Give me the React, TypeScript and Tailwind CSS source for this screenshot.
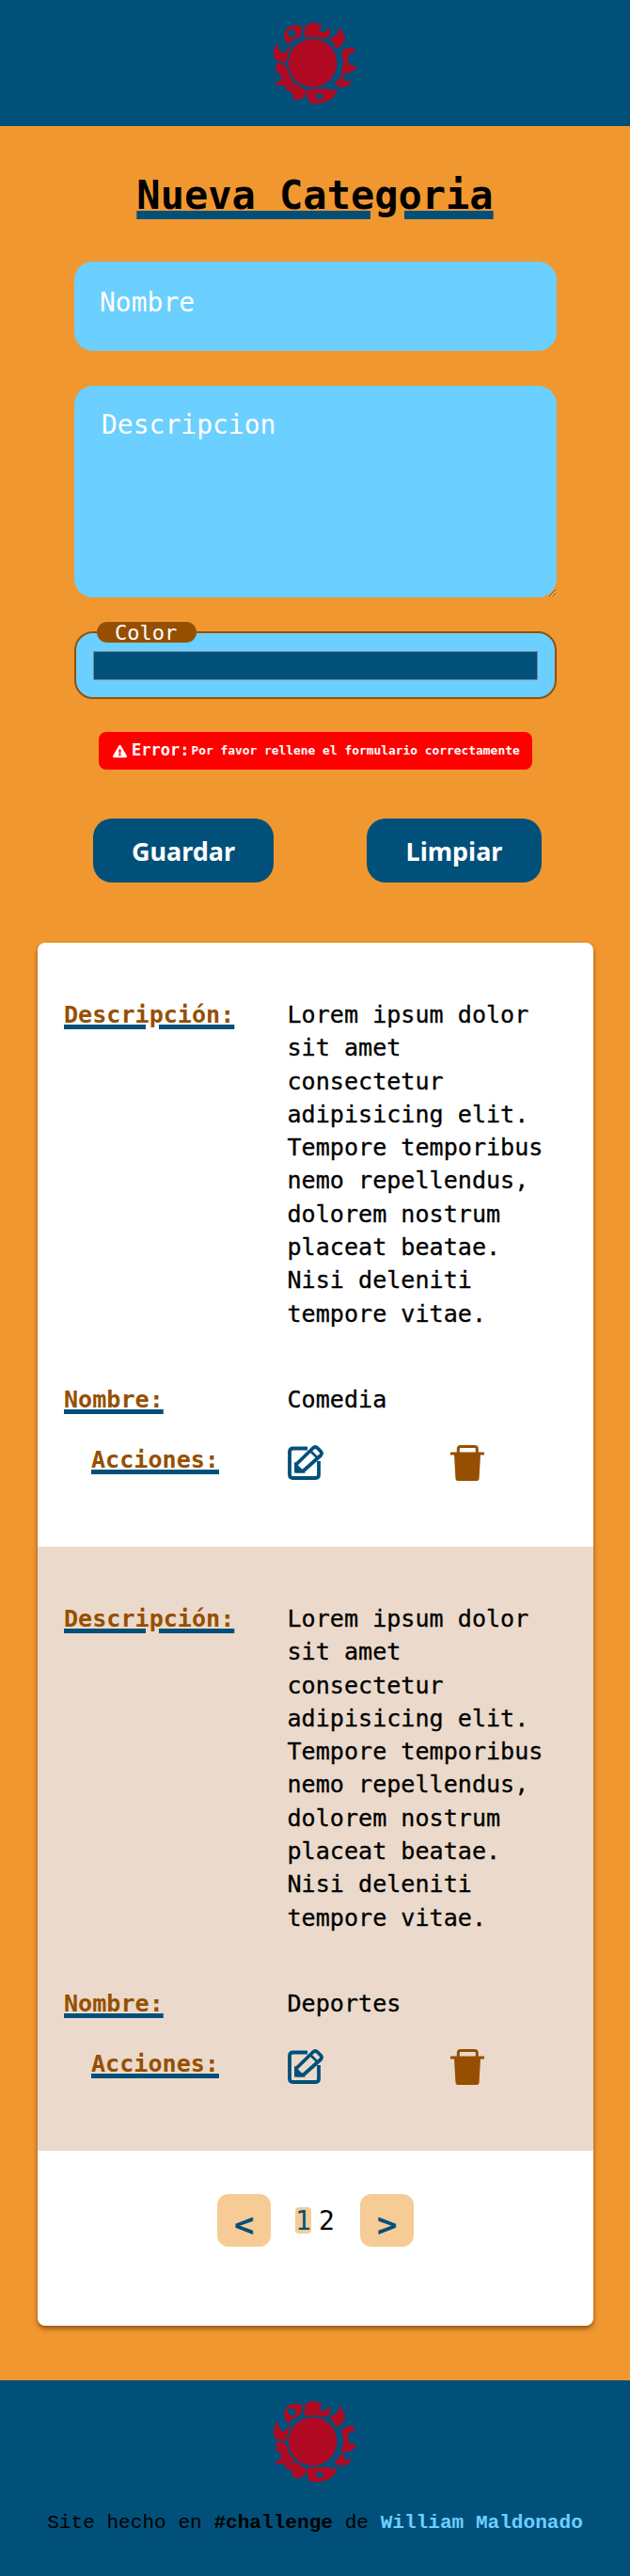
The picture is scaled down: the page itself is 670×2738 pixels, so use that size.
import { FaExclamationTriangle } from "react-icons/fa"

const mono = "font-['DejaVu_Sans_Mono','Liberation_Mono',monospace]"

function Logo() {
  return (
    <svg viewBox="125 65 265 260" className="h-[86px] w-[88px]" fill="#b00b23" stroke="#b00b23" strokeWidth="3" fillRule="evenodd">
      <path d="M222 108C228 95 222 82 232 74C240 66 258 64 270 72L282 76C272 78 268 84 272 92C278 100 292 100 302 84C308 96 304 108 296 112C280 118 270 112 250 112C240 112 230 112 222 108Z" />
      <path d="M214 78C195 72 175 74 165 90C155 105 158 122 172 134C178 124 190 118 200 114C214 108 216 90 214 78ZM183 86A14 14 0 1 0 183.1 114A14 14 0 1 0 183 86Z" />
      <path d="M338 82C336 95 330 105 318 112L306 114C312 124 320 134 325 148C345 138 355 125 350 108C347 98 342 90 338 82Z" />
      <path d="M342 162C355 146 378 140 388 158C372 158 360 170 362 186C364 200 376 208 390 206C384 222 362 230 342 226C350 210 354 180 342 162Z" />
      <path d="M350 228C340 240 330 255 320 262C335 272 360 280 375 252C360 262 340 250 350 228Z" />
      <path d="M232 288C240 300 232 314 240 320C255 328 280 322 292 318C310 314 325 300 325 278C320 285 315 290 310 282C300 276 285 282 270 278C255 274 240 278 232 288ZM272 290A12 12 0 1 0 272.1 314A12 12 0 1 0 272 290Z" />
      <path d="M160 272C172 264 185 268 200 262C210 270 220 282 232 286C225 300 218 312 200 312C185 312 180 295 190 288C180 284 170 290 160 272Z" />
      <path d="M130 200C145 192 165 200 172 218C175 232 180 245 190 258C175 266 150 268 128 262C145 258 155 245 148 232C142 222 135 222 130 226C138 216 138 206 130 200Z" />
      <path d="M136 132C138 150 145 165 160 165C166 155 172 148 178 140C172 160 168 175 168 192C150 192 130 190 126 172C124 155 130 145 136 132Z" />
      <circle cx="250" cy="195" r="84" fill="#01507a" stroke="none" />
      <circle cx="250" cy="195" r="78" stroke="none" />
    </svg>
  )
}

function EditIcon() {
  return (
    <svg viewBox="0 0 38 37" className="h-[37px] w-[38px]" fill="none" stroke="#01507a" strokeWidth="3.8">
      <path d="M21 3.5H5.5Q2 3.5 2 7V31.5Q2 35 5.5 35H29.5Q33 35 33 31.5V17" />
      <path d="M9 27.5V20.5L27 3Q29.5 1 31.5 3L35 6.5Q37 8.5 35 11L16.5 27.5Z" strokeLinejoin="round" />
      <path d="M24 6L32 14" strokeWidth="2.6" />
      <path d="M9 27.5V22L14.5 27.5Z" fill="#01507a" />
    </svg>
  )
}

function TrashIcon() {
  return (
    <svg viewBox="0 0 36 38" className="h-[38px] w-[36px]" fill="#964f00">
      <path d="M8.3 9V4Q8.3 1.5 10.8 1.5H25.8Q28.3 1.5 28.3 4V9" fill="none" stroke="#964f00" strokeWidth="3" />
      <rect x="0" y="7.5" width="36" height="3" rx="0.5" />
      <path d="M4 10L5.5 36Q5.7 38 8 38H28Q30.3 38 30.5 36L32 10Z" />
    </svg>
  )
}

function Row({ nombre, shaded }: { nombre: string; shaded?: boolean }) {
  const label =
    "font-bold text-[#964f00] underline decoration-[#01507a] decoration-[5px] underline-offset-[2px]"
  return (
    <div className={`h-[642px] pl-[28px] pt-[59px] text-[25.1px] leading-[35.3px] ${shaded ? "bg-[#ebdacb]" : ""}`}>
      <div className="flex">
        <span className={`w-[237.5px] shrink-0 ${label}`}>Descripción:</span>
        <p className="w-[300px] text-black [-webkit-text-stroke:0.3px_black]">
          Lorem ipsum dolor sit amet consectetur adipisicing elit. Tempore temporibus nemo repellendus, dolorem nostrum
          placeat beatae. Nisi deleniti tempore vitae.
        </p>
      </div>
      <div className="mt-[56px] flex">
        <span className={`w-[237.5px] shrink-0 ${label}`}>Nombre:</span>
        <span className="text-black [-webkit-text-stroke:0.3px_black]">{nombre}</span>
      </div>
      <div className="mt-[29px] flex">
        <div className="w-[237.5px] shrink-0 pl-[29px]">
          <span className={label}>Acciones:</span>
        </div>
        <div className="mt-[2px] flex w-[209px] items-start justify-between">
          <EditIcon />
          <TrashIcon />
        </div>
      </div>
    </div>
  )
}

export default function App() {
  return (
    <div className={`flex min-h-[2738px] w-[670px] flex-col bg-[#f1972f] ${mono}`}>
      <header className="flex h-[134px] items-center justify-center bg-[#01507a]">
        <Logo />
      </header>

      <main className="flex flex-1 flex-col">
        <h1 className="mt-[49px] text-center text-[42px] leading-[50px] font-bold text-black underline decoration-[#01507a] decoration-[9px] underline-offset-[2px]">
          Nueva Categoria
        </h1>

        <form className="ml-[79px] w-[513px]">
          <input
            placeholder="Nombre"
            className={`mt-[45px] block h-[95px] w-full rounded-[20px] bg-[#6bcfff] pl-[27px] pb-[8px] text-[28px] text-white outline-none placeholder:text-white ${mono}`}
          />
          <textarea
            placeholder="Descripcion"
            className={`mt-[37px] block h-[225px] w-full rounded-[20px] bg-[#6bcfff] pt-[21px] pl-[29px] text-[28px] text-white outline-none placeholder:text-white ${mono}`}
          />
          <fieldset className="mt-[26px] h-[82px] rounded-[20px] border-2 border-[#964f00] bg-[#6bcfff] pr-[18px] pl-[18px]">
            <legend className="ml-[4px] h-[22px] w-[106px] rounded-full bg-[#964f00] pl-[19px] text-left text-[22px] leading-[24px] text-white">
              Color
            </legend>
            <div className="mt-[9px] h-[31px] border border-[#7a8a96] bg-[#01507a]" />
          </fieldset>
        </form>

        <div className="mt-[35px] ml-[105px] flex h-[40px] w-[461px] items-center rounded-[8px] bg-[#ff0000] pl-[15px] text-white">
          <FaExclamationTriangle size={15} />
          <span className="ml-[5px] text-[17px] font-bold">Error:</span>
          <span className="ml-[2px] text-[12.9px] font-bold">Por favor rellene el formulario correctamente</span>
        </div>

        <div className="mt-[52px] ml-[99px] flex gap-[99px] font-['Noto_Sans',sans-serif] text-[27px] font-bold text-white">
          <button type="button" className="h-[68px] w-[192px] rounded-[20px] bg-[#01507a] pt-[3px]">
            Guardar
          </button>
          <button type="button" className="h-[68px] w-[186px] rounded-[20px] bg-[#01507a] pt-[3px]">
            Limpiar
          </button>
        </div>

        <section className="mt-[64px] ml-[40px] h-[1470px] w-[591px] overflow-hidden rounded-[8px] bg-white shadow-[0_3px_5px_rgba(80,40,0,0.6)]">
          <Row nombre="Comedia" />
          <Row nombre="Deportes" shaded />
          <nav className="mt-[46px] flex items-center justify-center">
            <button type="button" className="h-[56px] w-[57px] rounded-[12px] bg-[#f6cb96] pt-[6px] text-[36px] font-bold text-[#01507a]">
              &lt;
            </button>
            <span className="ml-[26px] h-[28px] w-[17px] rounded-[4px] bg-[#f6cb96] text-center text-[28px] leading-[30px] text-[#01507a]">
              1
            </span>
            <span className="ml-[8px] h-[28px] w-[17px] text-center text-[28px] leading-[30px] text-black">2</span>
            <button type="button" className="ml-[27px] h-[56px] w-[57px] rounded-[12px] bg-[#f6cb96] pt-[6px] text-[36px] font-bold text-[#01507a]">
              &gt;
            </button>
          </nav>
        </section>
      </main>

      <footer className="flex h-[208px] flex-col items-center bg-[#01507a] pt-[22px]">
        <Logo />
        <p className="mt-[28px] font-['Liberation_Mono',monospace] text-[21.1px] whitespace-nowrap text-black">
          Site hecho en <b>#challenge</b> de <b className="text-[#6bcfff]">William Maldonado</b>
        </p>
      </footer>
    </div>
  )
}
